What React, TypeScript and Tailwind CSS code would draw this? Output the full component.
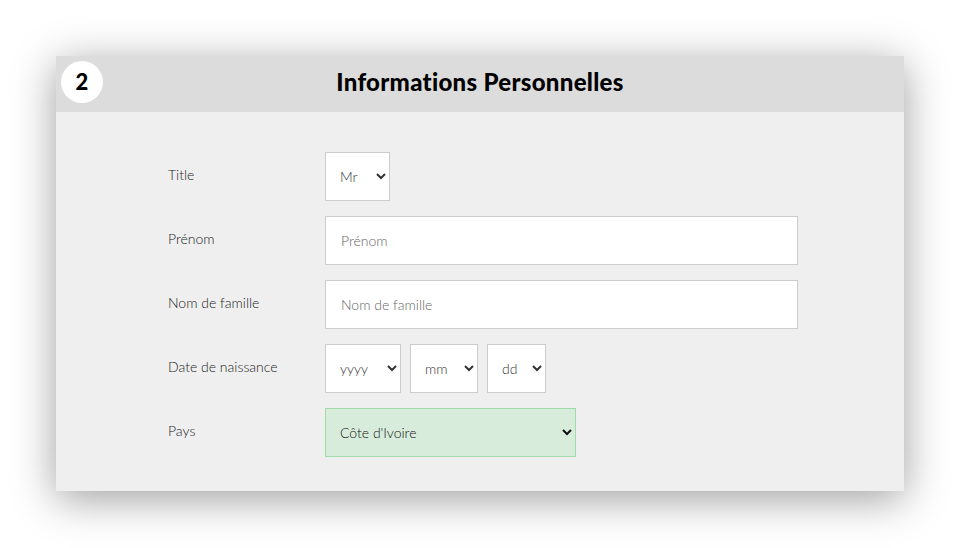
import React from 'react';

const font = { fontFamily: 'Lato, "Open Sans", sans-serif' };

export default function App() {
  const years = ['yyyy'];
  return (
    <div className="min-h-[548px] w-[960px] bg-white pt-[56px] px-[56px]" style={font}>
      <div className="bg-[#efefef] shadow-[0_8px_40px_rgba(0,0,0,0.38)]">
        {/* en-tête */}
        <div className="relative h-[56px] bg-[#dcdcdc] flex items-center justify-center">
          <div className="absolute left-[5px] top-[5px] w-[42px] h-[42px] rounded-full bg-white flex items-center justify-center">
            <span className="text-[22px] font-black text-black leading-none">2</span>
          </div>
          <h2 className="text-[24px] font-black text-black leading-none pb-[4px] tracking-[0.3px]">Informations Personnelles</h2>
        </div>

        <div className="pl-[112px] pt-[40px] pb-[34px] flex flex-col gap-[15px] font-light">
          <div className="flex">
            <label className="w-[157px] pt-[12px] text-[14px] text-[#1a1a1a]">Title</label>
            <select className="w-[65px] h-[49px] pl-[10px] pr-[6px] bg-white border border-[#ccc] text-[14px] text-[#333]">
              <option>Mr</option>
              <option>Mme</option>
            </select>
          </div>

          <div className="flex">
            <label className="w-[157px] pt-[12px] text-[14px] text-[#1a1a1a]">Prénom</label>
            <input placeholder="Prénom" className="w-[473px] h-[49px] px-[15px] bg-white border border-[#ccc] text-[14px] placeholder:text-[#666] outline-none" />
          </div>

          <div className="flex">
            <label className="w-[157px] pt-[12px] text-[14px] text-[#1a1a1a]">Nom de famille</label>
            <input placeholder="Nom de famille" className="w-[473px] h-[49px] px-[15px] bg-white border border-[#ccc] text-[14px] placeholder:text-[#666] outline-none" />
          </div>

          <div className="flex">
            <label className="w-[157px] pt-[12px] text-[14px] text-[#1a1a1a]">Date de naissance</label>
            <div className="flex gap-[9px]">
              <select className="w-[76px] h-[49px] pl-[10px] pr-[6px] bg-white border border-[#ccc] text-[14px] text-[#333]">
                {years.map((y) => (
                  <option key={y}>{y}</option>
                ))}
              </select>
              <select className="w-[68px] h-[49px] pl-[10px] pr-[6px] bg-white border border-[#ccc] text-[14px] text-[#333]">
                <option>mm</option>
              </select>
              <select className="w-[59px] h-[49px] pl-[10px] pr-[6px] bg-white border border-[#ccc] text-[14px] text-[#333]">
                <option>dd</option>
              </select>
            </div>
          </div>

          <div className="flex">
            <label className="w-[157px] pt-[12px] text-[14px] text-[#1a1a1a]">Pays</label>
            <select className="w-[251px] h-[49px] pl-[10px] pr-[6px] bg-[#d8ecdc] border border-[#9fdcaa] text-[14px] text-[#111]">
              <option>Côte d'Ivoire</option>
            </select>
          </div>
        </div>
      </div>
    </div>
  );
}
